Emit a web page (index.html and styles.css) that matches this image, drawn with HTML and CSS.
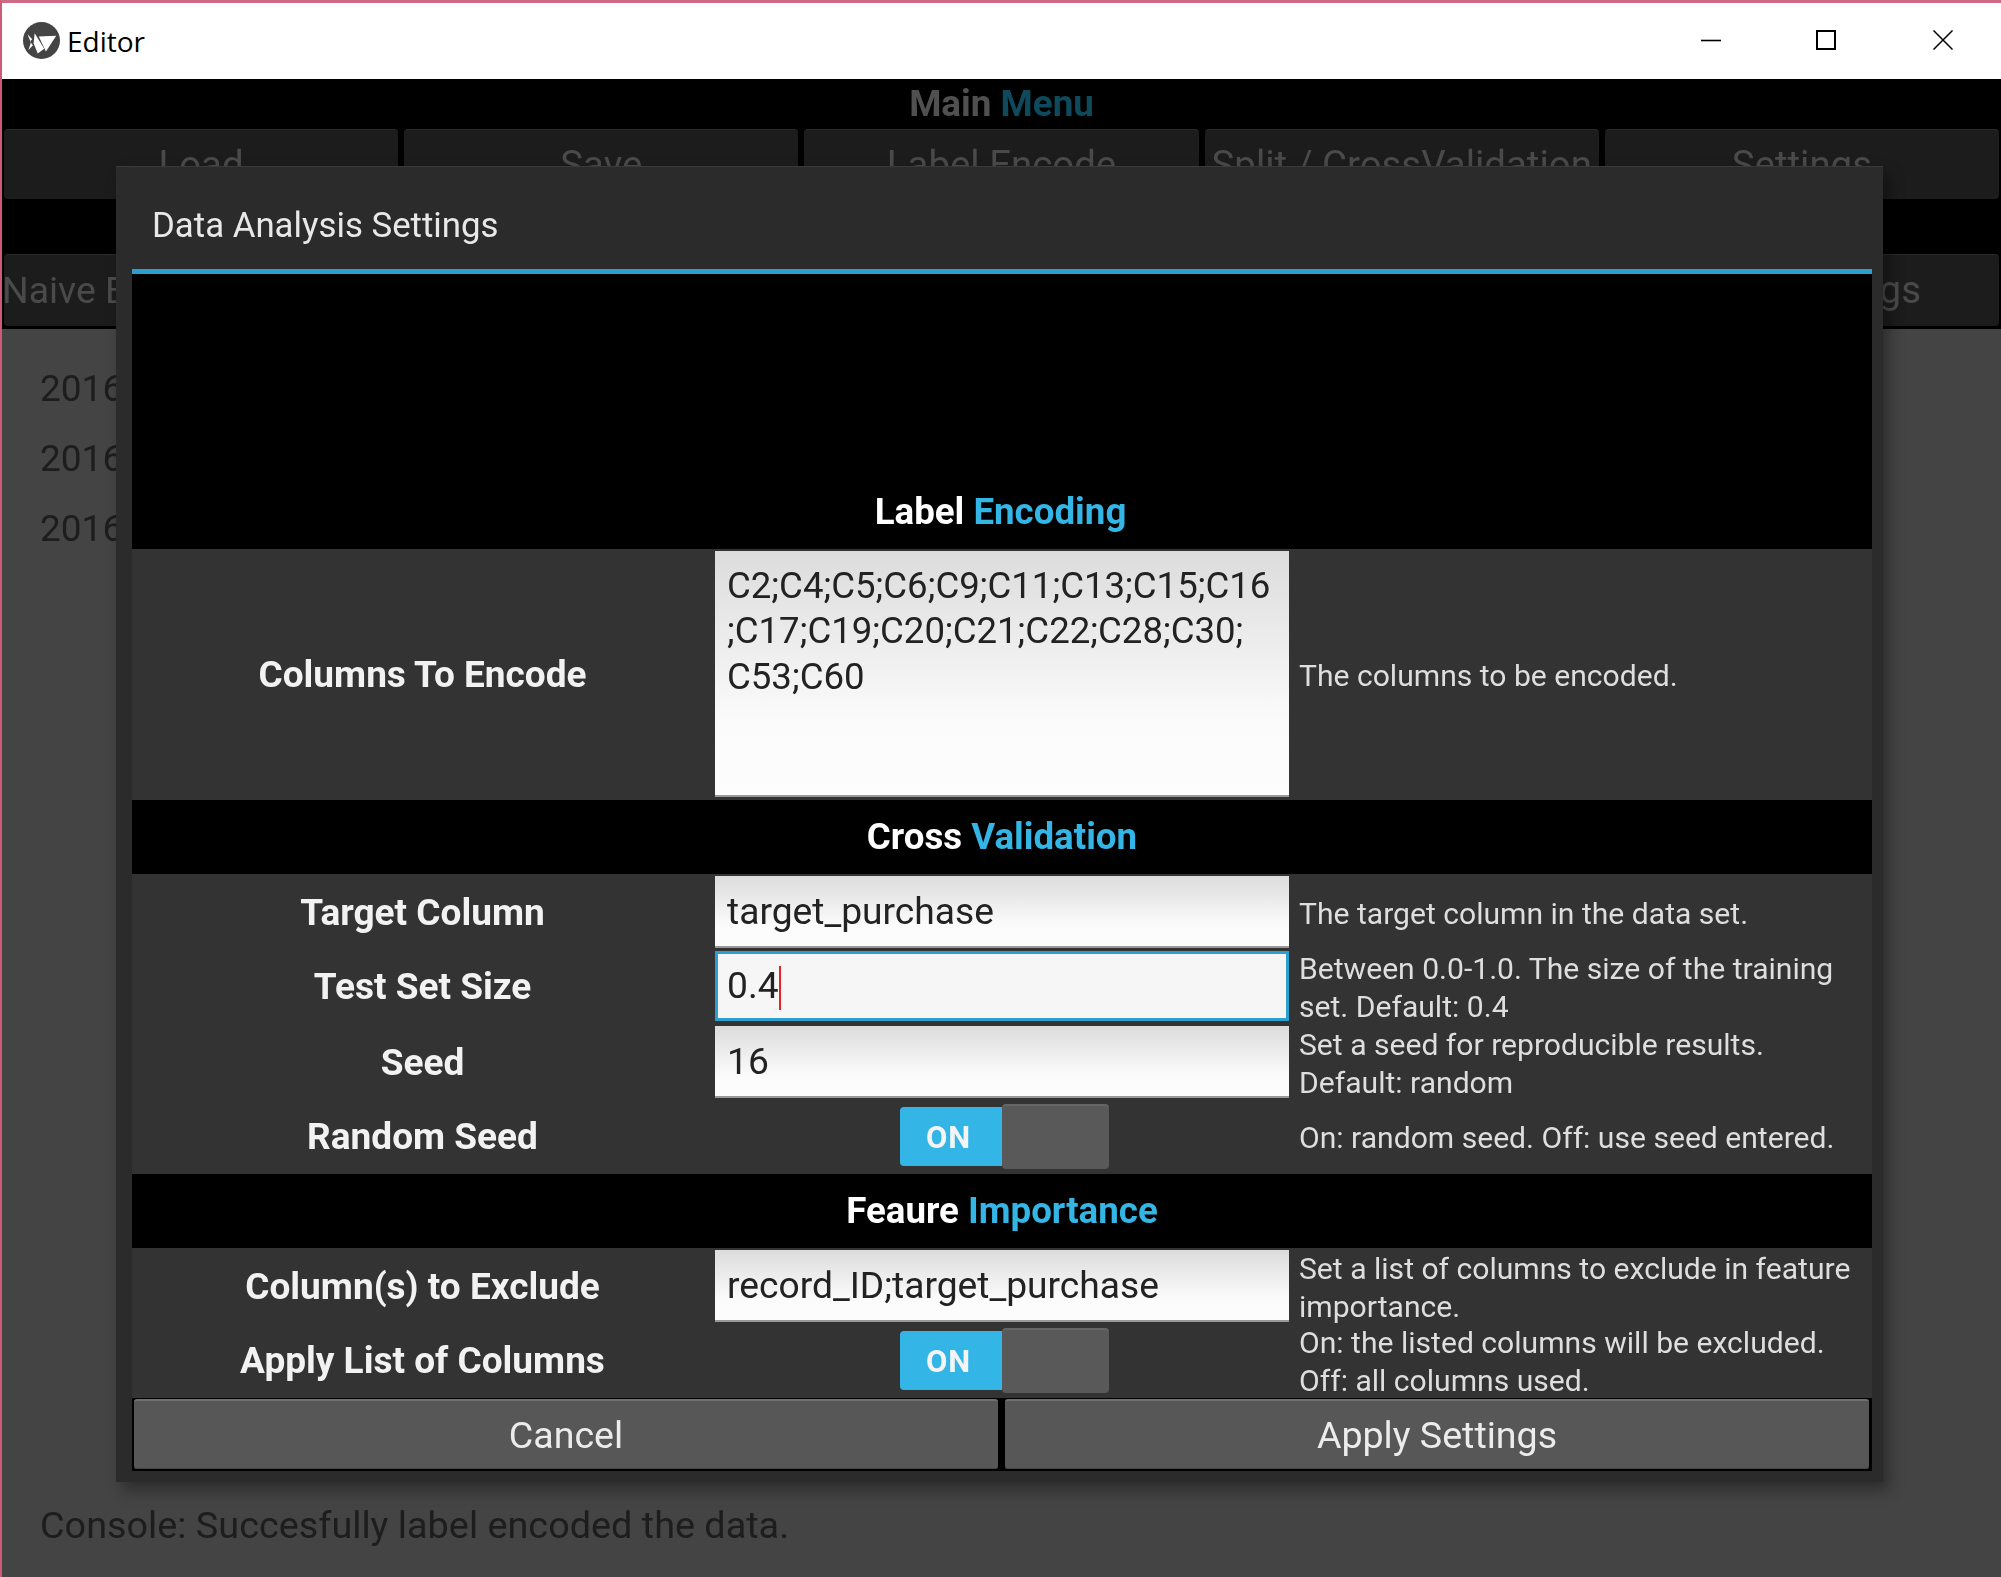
FILE: index.html
```html
<!DOCTYPE html>
<html lang="en">
<head>
<meta charset="utf-8">
<title>Editor</title>
<link rel="stylesheet" href="styles.css">
</head>
<body>
<div class="window">
  <header class="titlebar">
    <div class="title-left">
      <svg class="logo" viewBox="0 0 108 108" aria-hidden="true">
        <circle cx="54" cy="54" r="54" fill="#444"/>
        <path d="M13 36 L27 50 L20 57 L29 68 L16 82 L23 60 Z" fill="#fff"/>
        <path d="M34 33 L62 78 L43 92 L31 62 Z" fill="#fff"/>
        <path d="M46 42 L97 40 L67 86 Z" fill="#fff"/>
      </svg>
      <span class="title-text">Editor</span>
    </div>
    <div class="controls">
      <svg class="ctl" viewBox="0 0 20 20" aria-hidden="true"><path d="M0 10.5H20" stroke="#000" stroke-width="1.6" fill="none"/></svg>
      <svg class="ctl" viewBox="0 0 20 20" aria-hidden="true"><rect x="1" y="1" width="18" height="18" stroke="#000" stroke-width="2" fill="none"/></svg>
      <svg class="ctl ctl-close" viewBox="0 0 20 20" aria-hidden="true"><path d="M0.5 0.5L19.5 19.5M19.5 0.5L0.5 19.5" stroke="#000" stroke-width="1.5" fill="none"/></svg>
    </div>
  </header>

  <main class="app">
    <div class="app-top">
      <div class="menu-title">Main <span class="menu-accent">Menu</span></div>
      <div class="btn-row">
        <div class="bg-btn">Load</div><div class="bg-btn">Save</div><div class="bg-btn">Label Encode</div><div class="bg-btn">Split / CrossValidation</div><div class="bg-btn">Settings</div>
      </div>
      <div class="btn-row btn-row-2">
        <div class="bg-btn bg-btn-left">Naive Bayes</div><div class="bg-btn"></div><div class="bg-btn"></div><div class="bg-btn"></div><div class="bg-btn bg-btn-right">Model Settings</div>
      </div>
    </div>
    <div class="app-log">
      <div class="log-lines">
        <div class="log-line">2016</div>
        <div class="log-line">2016</div>
        <div class="log-line">2016</div>
      </div>
      <div class="console">Console: Succesfully label encoded the data.</div>
    </div>

    <section class="dialog">
      <h2 class="dialog-title">Data Analysis Settings</h2>
      <div class="dialog-rule"></div>
      <div class="dialog-body">
        <div class="spacer"></div>
        <div class="section section-first">Label <span class="accent">Encoding</span></div>
        <div class="row row-tall">
          <div class="label">Columns To Encode</div>
          <div class="field-cell"><div class="field field-multi">C2;C4;C5;C6;C9;C11;C13;C15;C16<br>;C17;C19;C20;C21;C22;C28;C30;<br>C53;C60</div></div>
          <div class="desc">The columns to be encoded.</div>
        </div>
        <div class="section">Cross <span class="accent">Validation</span></div>
        <div class="row">
          <div class="label">Target Column</div>
          <div class="field-cell"><div class="field">target_purchase</div></div>
          <div class="desc">The target column in the data set.</div>
        </div>
        <div class="row">
          <div class="label">Test Set Size</div>
          <div class="field-cell"><div class="field field-focus">0.4<span class="caret"></span></div></div>
          <div class="desc">Between 0.0-1.0. The size of the training<br>set. Default: 0.4</div>
        </div>
        <div class="row">
          <div class="label">Seed</div>
          <div class="field-cell"><div class="field">16</div></div>
          <div class="desc">Set a seed for reproducible results.<br>Default: random</div>
        </div>
        <div class="row">
          <div class="label">Random Seed</div>
          <div class="toggle-cell"><div class="toggle"><div class="toggle-on">ON</div><div class="toggle-knob"></div></div></div>
          <div class="desc">On: random seed. Off: use seed entered.</div>
        </div>
        <div class="section">Feaure <span class="accent">Importance</span></div>
        <div class="row">
          <div class="label">Column(s) to Exclude</div>
          <div class="field-cell"><div class="field">record_ID;target_purchase</div></div>
          <div class="desc">Set a list of columns to exclude in feature<br>importance.</div>
        </div>
        <div class="row">
          <div class="label">Apply List of Columns</div>
          <div class="toggle-cell"><div class="toggle"><div class="toggle-on">ON</div><div class="toggle-knob"></div></div></div>
          <div class="desc">On: the listed columns will be excluded.<br>Off: all columns used.</div>
        </div>
        <div class="actions">
          <div class="action">Cancel</div>
          <div class="action">Apply Settings</div>
        </div>
      </div>
    </section>
  </main>
</div>
</body>
</html>
```

FILE: styles.css
```css
* { box-sizing: border-box; }
html, body { margin: 0; padding: 0; }
body { width: 2001px; height: 1577px; overflow: hidden; background: #444; font-family: Roboto, "Liberation Sans", sans-serif; }

.window { width: 2001px; height: 1577px; display: flex; flex-direction: column; border-top: 3px solid #cf6a85; border-left: 2px solid #cf5a78; }

.titlebar { height: 76px; flex: none; background: #fff; display: flex; align-items: center; justify-content: space-between; }
.title-left { display: flex; align-items: center; gap: 7px; padding-left: 21px; }
.logo { width: 37px; height: 37px; display: block; margin-bottom: 2px; }
.title-text { font-family: "Open Sans", "Noto Sans", sans-serif; font-size: 28px; color: #000; line-height: 36px; }
.controls { display: flex; gap: 95px; padding-right: 48px; margin-bottom: 2px; }
.ctl { width: 20px; height: 20px; display: block; }
.ctl-close { margin-left: 2px; }

.app { position: relative; flex: 1; display: flex; flex-direction: column; background: #444; filter: blur(0.7px); }

.app-top { background: #000; height: 250px; flex: none; padding: 0 2px 0 2px; }
.menu-title { height: 50px; text-align: center; font-size: 36.8px; font-weight: 700; line-height: 50px; color: #505050; }
.menu-accent { color: #0f4a5c; }
.btn-row { display: flex; gap: 6px; height: 70px; }
.btn-row-2 { margin-top: 55px; height: 72px; }
.bg-btn { flex: 1; background: #1c1c1c; border-top: 1px solid #2a2a2a; border-radius: 4px; color: #4a4a4a; font-size: 38.4px; text-align: center; line-height: 70px; overflow: hidden; white-space: nowrap; }
.bg-btn-left { text-align: left; overflow: visible; font-size: 37.4px; text-indent: -2px; }
.bg-btn-right { text-align: right; padding-right: 78px; }

.app-log { flex: 1; display: flex; flex-direction: column; justify-content: space-between; padding: 25px 0 30px 38px; color: #1d1d1d; font-size: 37px; }
.log-line { height: 70px; line-height: 70px; }
.console { line-height: 44px; font-size: 37.8px; }

.dialog { position: absolute; left: 114px; top: 87px; width: 1767px; height: 1316px; background: #2b2b2b; border-top: 1px solid #3a3a3a; padding: 0 11px 11px 16px; display: flex; flex-direction: column; box-shadow: 6px 8px 14px rgba(0, 0, 0, 0.35); }
.dialog-title { margin: 0; height: 102px; flex: none; padding: 13px 0 0 20px; font-size: 34.8px; font-weight: 400; line-height: 90px; color: #e8e8e8; }
.dialog-rule { height: 5px; flex: none; background: #2a9fd0; }
.dialog-body { flex: 1; display: flex; flex-direction: column; background: #333; }

.spacer { height: 200px; flex: none; background: #000; }
.section { height: 74px; flex: none; background: #000; color: #fff; text-align: center; font-size: 36.7px; font-weight: 700; line-height: 73px; }
.section-first { height: 75px; line-height: 76px; padding-right: 3px; }
.accent { color: #33b5e5; }

.row { height: 75px; flex: none; display: grid; grid-template-columns: 583px 574px 583px; align-items: center; }
.row-tall { height: 251px; }
.label { text-align: center; color: #f2f2f2; font-size: 37px; font-weight: 700; padding-right: 2px; }
.desc { color: #dedede; font-size: 30.1px; line-height: 37.5px; padding-left: 10px; white-space: nowrap; position: relative; top: 1px; }

.field-cell { align-self: stretch; padding: 2px 0 3px; display: flex; }
.field { flex: 1; background: linear-gradient(#dcdcdc, #fbfbfb 70%, #fdfdfd); border-bottom: 2px solid #999; padding-left: 12px; font-size: 37.2px; line-height: 70px; color: #222; white-space: nowrap; }
.field-multi { font-size: 36.6px; line-height: 45.4px; padding-top: 12px; }
.field-focus { background: #f6f6f6; border: 3px solid #2a9fd0; padding-left: 9px; line-height: 62px; }
.caret { display: inline-block; width: 2px; height: 44px; background: #e8202a; vertical-align: middle; }

.toggle-cell { display: flex; justify-content: center; padding-left: 4px; }
.toggle { display: flex; align-items: center; }
.toggle-on { width: 102px; height: 59px; background: #33b5e5; border-radius: 4px 0 0 4px; color: #f4f4f4; font-size: 31px; font-weight: 700; text-align: center; line-height: 62px; letter-spacing: 1px; padding-right: 4px; overflow: hidden; }
.toggle-knob { width: 107px; height: 65px; background: #595959; border-top: 2px solid #666; border-radius: 4px; }

.actions { flex: 1; display: flex; gap: 7px; background: #000; padding: 1px 3px 2px 2px; }
.action { flex: 1; background: #575757; border-top: 2px solid #707070; border-radius: 3px; box-shadow: inset 0 -1px 0 #444; color: #ececec; font-size: 37.6px; text-align: center; line-height: 68px; }
```
